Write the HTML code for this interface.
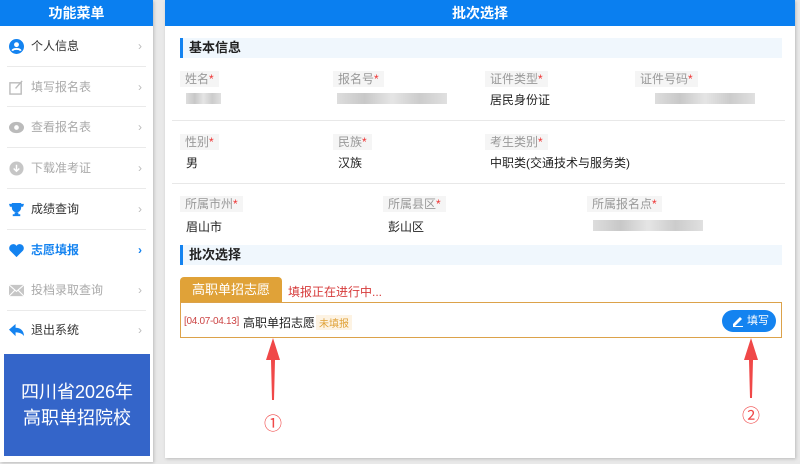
<!DOCTYPE html>
<html><head><meta charset="utf-8"><style>
*{margin:0;padding:0;box-sizing:border-box}
body{width:800px;height:464px;background:#e9e9e9;font-family:"Liberation Sans","Noto Sans CJK SC",sans-serif;position:relative;overflow:hidden;font-size:12px;color:#222}
.abs{position:absolute}
.side{left:0;top:0;width:153px;height:462px;background:#fff;box-shadow:1px 1px 3px #bbb}
.hd{background:#0a7ff0;color:#fff;font-weight:bold;text-align:center;height:26px;line-height:26px;font-size:14px}
.mi{position:absolute;left:7px;width:139px;height:40px;line-height:40px;color:#aaa;font-size:12px}
.mi .ic{position:absolute;left:2px;top:13px;width:15px;height:15px}
.mi .t{position:absolute;left:24px}
.mi .ar{position:absolute;right:4px;color:#bbb;font-size:12px}
.sep{position:absolute;left:7px;width:139px;height:1px;background:#eaeaea}
.main{left:165px;top:0;width:630px;height:458px;background:#fff;box-shadow:1px 1px 3px #bbb}
.sec{position:absolute;left:15px;width:602px;height:20px;background:#f0f7fd;border-left:3px solid #1483f0;font-weight:bold;line-height:20px;padding-left:6px;font-size:13px}
.lb{position:absolute;background:#f5f5f5;color:#999;height:16px;line-height:16px;padding:0 5px;font-size:12px}
.lb b{color:#e33;font-weight:normal}
.v{position:absolute;font-size:12px;color:#222}
.blur{position:absolute;height:11px;background:linear-gradient(90deg,#ddd,#c8c8c8,#e5e5e5,#ccc,#e0e0e0)}
.hl{position:absolute;left:7px;width:613px;height:1px;background:#e8e8e8}
</style></head><body>
<div class="abs side">
<div class="hd">功能菜单</div>
<div class="mi" style="top:26px;color:#333"><svg class="ic" viewBox="0 0 16 16"><circle cx="8" cy="8" r="8" fill="#1483f0"/><circle cx="8" cy="6" r="2.6" fill="#fff"/><path d="M3.5 12.5c1-2.5 8-2.5 9 0" stroke="#fff" stroke-width="2" fill="none"/></svg><span class="t">个人信息</span><span class="ar">›</span></div>
<div class="sep" style="top:66px"></div>
<div class="mi" style="top:67px"><svg class="ic" viewBox="0 0 16 16"><rect x="1" y="3" width="12" height="12" fill="none" stroke="#bbb" stroke-width="1.5"/><path d="M7 9l7-8" stroke="#bbb" stroke-width="1.5"/></svg><span class="t">填写报名表</span><span class="ar">›</span></div>
<div class="sep" style="top:106px"></div>
<div class="mi" style="top:107px"><svg class="ic" viewBox="0 0 16 16"><ellipse cx="8" cy="8" rx="8" ry="6" fill="#bbb"/><circle cx="8" cy="8" r="2.5" fill="#fff"/></svg><span class="t">查看报名表</span><span class="ar">›</span></div>
<div class="sep" style="top:147px"></div>
<div class="mi" style="top:148px"><svg class="ic" viewBox="0 0 16 16"><circle cx="8" cy="8" r="7.5" fill="#c6c6c6"/><path d="M8 4v7M5 8l3 3 3-3" stroke="#fff" stroke-width="1.5" fill="none"/></svg><span class="t">下载准考证</span><span class="ar">›</span></div>
<div class="sep" style="top:188px"></div>
<div class="mi" style="top:189px;color:#333"><svg class="ic" viewBox="0 0 16 16"><path d="M3 1h10v5a5 5 0 0 1-10 0z M0 2h3v3H1z M13 2h3l-1 3h-2z M6 11h4v2h2v2H4v-2h2z" fill="#1483f0"/></svg><span class="t">成绩查询</span><span class="ar">›</span></div>
<div class="sep" style="top:229px"></div>
<div class="mi" style="top:230px;color:#1483f0;font-weight:bold"><svg class="ic" viewBox="0 0 16 16"><path d="M8 15L1 8a4 4 0 0 1 7-5 4 4 0 0 1 7 5z" fill="#1483f0"/></svg><span class="t">志愿填报</span><span class="ar" style="color:#1483f0">›</span></div>
<div class="mi" style="top:270px"><svg class="ic" viewBox="0 0 16 16"><rect x="0" y="2" width="16" height="12" fill="#c6c6c6"/><path d="M0 2l8 7 8-7M0 14l6-6M16 14l-6-6" stroke="#fff" stroke-width="1.2" fill="none"/></svg><span class="t">投档录取查询</span><span class="ar">›</span></div>
<div class="sep" style="top:310px"></div>
<div class="mi" style="top:310px;color:#333"><svg class="ic" viewBox="0 0 16 16"><path d="M0 7l7-6v4c5 0 9 3 9 9-2-3-5-4-9-4v4z" fill="#1483f0"/></svg><span class="t">退出系统</span><span class="ar">›</span></div>
<div class="abs" style="left:4px;top:354px;width:146px;height:102px;background:#3465c9;color:#fff;text-align:center;font-size:18px;line-height:26px;padding-top:25px">四川省2026年<br>高职单招院校</div>
</div>
<div class="abs main">
<div class="hd">批次选择</div>
<div class="sec" style="top:38px">基本信息</div>
<div class="lb" style="left:15px;top:71px">姓名<b>*</b></div>
<div class="lb" style="left:168px;top:71px">报名号<b>*</b></div>
<div class="lb" style="left:320px;top:71px">证件类型<b>*</b></div>
<div class="lb" style="left:470px;top:71px">证件号码<b>*</b></div>
<div class="blur" style="left:21px;top:93px;width:35px"></div>
<div class="blur" style="left:172px;top:93px;width:110px"></div>
<div class="v" style="left:325px;top:91px">居民身份证</div>
<div class="blur" style="left:490px;top:93px;width:100px"></div>
<div class="hl" style="top:120px"></div>
<div class="lb" style="left:15px;top:134px">性别<b>*</b></div>
<div class="lb" style="left:168px;top:134px">民族<b>*</b></div>
<div class="lb" style="left:320px;top:134px">考生类别<b>*</b></div>
<div class="v" style="left:21px;top:154px">男</div>
<div class="v" style="left:173px;top:154px">汉族</div>
<div class="v" style="left:325px;top:154px">中职类(交通技术与服务类)</div>
<div class="hl" style="top:183px"></div>
<div class="lb" style="left:15px;top:196px">所属市州<b>*</b></div>
<div class="lb" style="left:218px;top:196px">所属县区<b>*</b></div>
<div class="lb" style="left:422px;top:196px">所属报名点<b>*</b></div>
<div class="v" style="left:21px;top:218px">眉山市</div>
<div class="v" style="left:223px;top:218px">彭山区</div>
<div class="blur" style="left:428px;top:220px;width:110px"></div>
<div class="sec" style="top:245px">批次选择</div>
<div class="abs" style="left:15px;top:277px;width:102px;height:26px;background:#e0a238;border-radius:4px 4px 0 0;color:#fff;font-size:13px;text-align:center;line-height:26px">高职单招志愿</div>
<div class="abs" style="left:123px;top:283px;color:#d63a3a;font-size:12px">填报正在进行中...</div>
<div class="abs" style="left:15px;top:302px;width:602px;height:36px;border:1px solid #dca24a"></div>
<div class="abs" style="left:19px;top:316px;font-size:10px;color:#c44;letter-spacing:-0.3px">[04.07-04.13]</div>
<div class="abs" style="left:78px;top:314px;font-size:12px;color:#222">高职单招志愿</div>
<div class="abs" style="left:151px;top:315px;font-size:10px;color:#e0a238;background:#fdf3e3;padding:0 3px">未填报</div>
<div class="abs" style="left:557px;top:310px;width:54px;height:22px;background:#1483f0;border-radius:11px;color:#fff;font-size:11px;line-height:22px;padding-left:25px"><svg style="position:absolute;left:10px;top:5px" width="12" height="12" viewBox="0 0 12 12"><path d="M1 9l7-7 2 2-7 7H1z" fill="#fff"/><path d="M1 11.5h10" stroke="#fff"/></svg>填写</div>
</div>
<svg class="abs" style="left:255px;top:338px" width="40" height="95"><path d="M18 0l-7 22h5l1 40h2l1-40h5z" fill="#f04848"/><text x="9" y="92" font-size="18" fill="#f04848" font-family="Liberation Sans,Noto Sans CJK SC,sans-serif">①</text></svg>
<svg class="abs" style="left:733px;top:338px" width="40" height="95"><path d="M18 0l-7 22h5l1 38h2l1-38h5z" fill="#f04848"/><text x="9" y="84" font-size="18" fill="#f04848" font-family="Liberation Sans,Noto Sans CJK SC,sans-serif">②</text></svg>
</body></html>
